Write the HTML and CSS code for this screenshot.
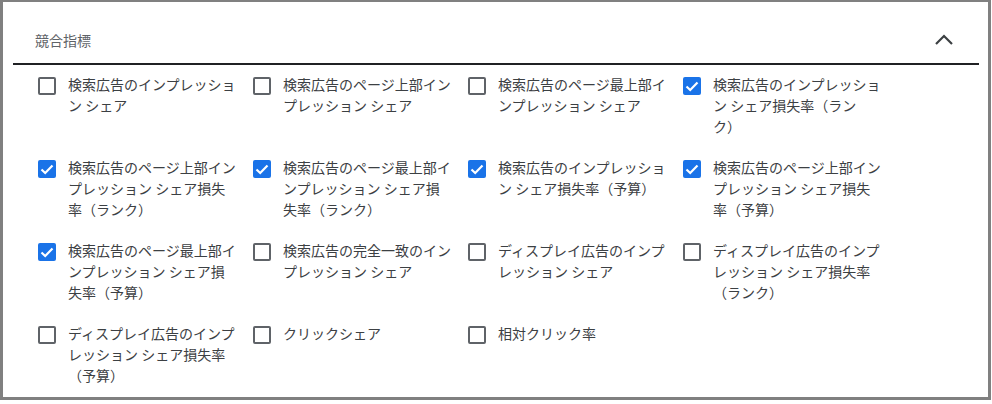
FILE: index.html
```html
<!DOCTYPE html>
<html lang="ja">
<head>
  <meta charset="UTF-8" />
  <title>競合指標</title>
  <link rel="stylesheet" href="styles.css">
</head>
<body>
  <div class="panel">
    <div class="header">
      <span class="title">競合指標</span>
      <svg class="chevron" width="20" height="12" viewBox="0 0 20 12">
        <polyline points="2,10 10,2 18,10" fill="none" stroke="#3c4043" stroke-width="2.2"/>
      </svg>
    </div>
    <div class="options">
      <div class="option"><span class="box"></span><span class="label">検索広告のインプレッション シェア</span></div>
      <div class="option"><span class="box"></span><span class="label">検索広告のページ上部インプレッション シェア</span></div>
      <div class="option"><span class="box"></span><span class="label">検索広告のページ最上部インプレッション シェア</span></div>
      <div class="option"><span class="box checked"><svg viewBox="0 0 18 18"><polyline points="3.5,9.5 7.2,13 14.5,5.5"/></svg></span><span class="label">検索広告のインプレッション シェア損失率（ランク）</span></div>

      <div class="option"><span class="box checked"><svg viewBox="0 0 18 18"><polyline points="3.5,9.5 7.2,13 14.5,5.5"/></svg></span><span class="label">検索広告のページ上部インプレッション シェア損失率（ランク）</span></div>
      <div class="option"><span class="box checked"><svg viewBox="0 0 18 18"><polyline points="3.5,9.5 7.2,13 14.5,5.5"/></svg></span><span class="label">検索広告のページ最上部インプレッション シェア損失率（ランク）</span></div>
      <div class="option"><span class="box checked"><svg viewBox="0 0 18 18"><polyline points="3.5,9.5 7.2,13 14.5,5.5"/></svg></span><span class="label">検索広告のインプレッション シェア損失率（予算）</span></div>
      <div class="option"><span class="box checked"><svg viewBox="0 0 18 18"><polyline points="3.5,9.5 7.2,13 14.5,5.5"/></svg></span><span class="label">検索広告のページ上部インプレッション シェア損失率（予算）</span></div>

      <div class="option"><span class="box checked"><svg viewBox="0 0 18 18"><polyline points="3.5,9.5 7.2,13 14.5,5.5"/></svg></span><span class="label">検索広告のページ最上部インプレッション シェア損失率（予算）</span></div>
      <div class="option"><span class="box"></span><span class="label">検索広告の完全一致のインプレッション シェア</span></div>
      <div class="option"><span class="box"></span><span class="label">ディスプレイ広告のインプレッション シェア</span></div>
      <div class="option"><span class="box"></span><span class="label">ディスプレイ広告のインプレッション シェア損失率（ランク）</span></div>

      <div class="option"><span class="box"></span><span class="label">ディスプレイ広告のインプレッション シェア損失率（予算）</span></div>
      <div class="option"><span class="box"></span><span class="label">クリックシェア</span></div>
      <div class="option"><span class="box"></span><span class="label">相対クリック率</span></div>
    </div>
  </div>
</body>
</html>
```

FILE: styles.css
```css
body {
  margin: 0;
  background: #fff;
  font-family: "Noto Sans CJK JP", "Noto Sans", sans-serif;
  color: #3c4043;
}

.panel {
  width: 991px;
  height: 400px;
  box-sizing: border-box;
  border: 3px solid #808080;
  border-top-width: 2px;
  padding: 0 9px 0 10px;
}

.header {
  display: flex;
  align-items: center;
  justify-content: space-between;
  height: 63px;
  box-sizing: border-box;
  padding: 26px 25px 11px 22px;
  border-bottom: 2px solid #202124;
}

.title {
  font-size: 14px;
  line-height: 24px;
  color: #5f6368;
}

.chevron {
  display: block;
  margin-top: -1px;
}

.options {
  display: grid;
  grid-template-columns: repeat(4, 200px);
  column-gap: 15px;
  row-gap: 20px;
  padding: 9px 0 0 25px;
}

.option {
  display: flex;
  align-items: flex-start;
  gap: 12px;
}

.box {
  flex: none;
  width: 18px;
  height: 18px;
  margin-top: 3px;
  box-sizing: border-box;
  border: 2px solid #5f6368;
  border-radius: 2px;
}

.box.checked {
  border: none;
  background: #1a73e8;
}

.box svg {
  display: block;
  width: 18px;
  height: 18px;
}

.box polyline {
  fill: none;
  stroke: #fff;
  stroke-width: 2.2;
}

.label {
  width: 170px;
  font-size: 14px;
  line-height: 21px;
  text-spacing-trim: space-all;
}
```
